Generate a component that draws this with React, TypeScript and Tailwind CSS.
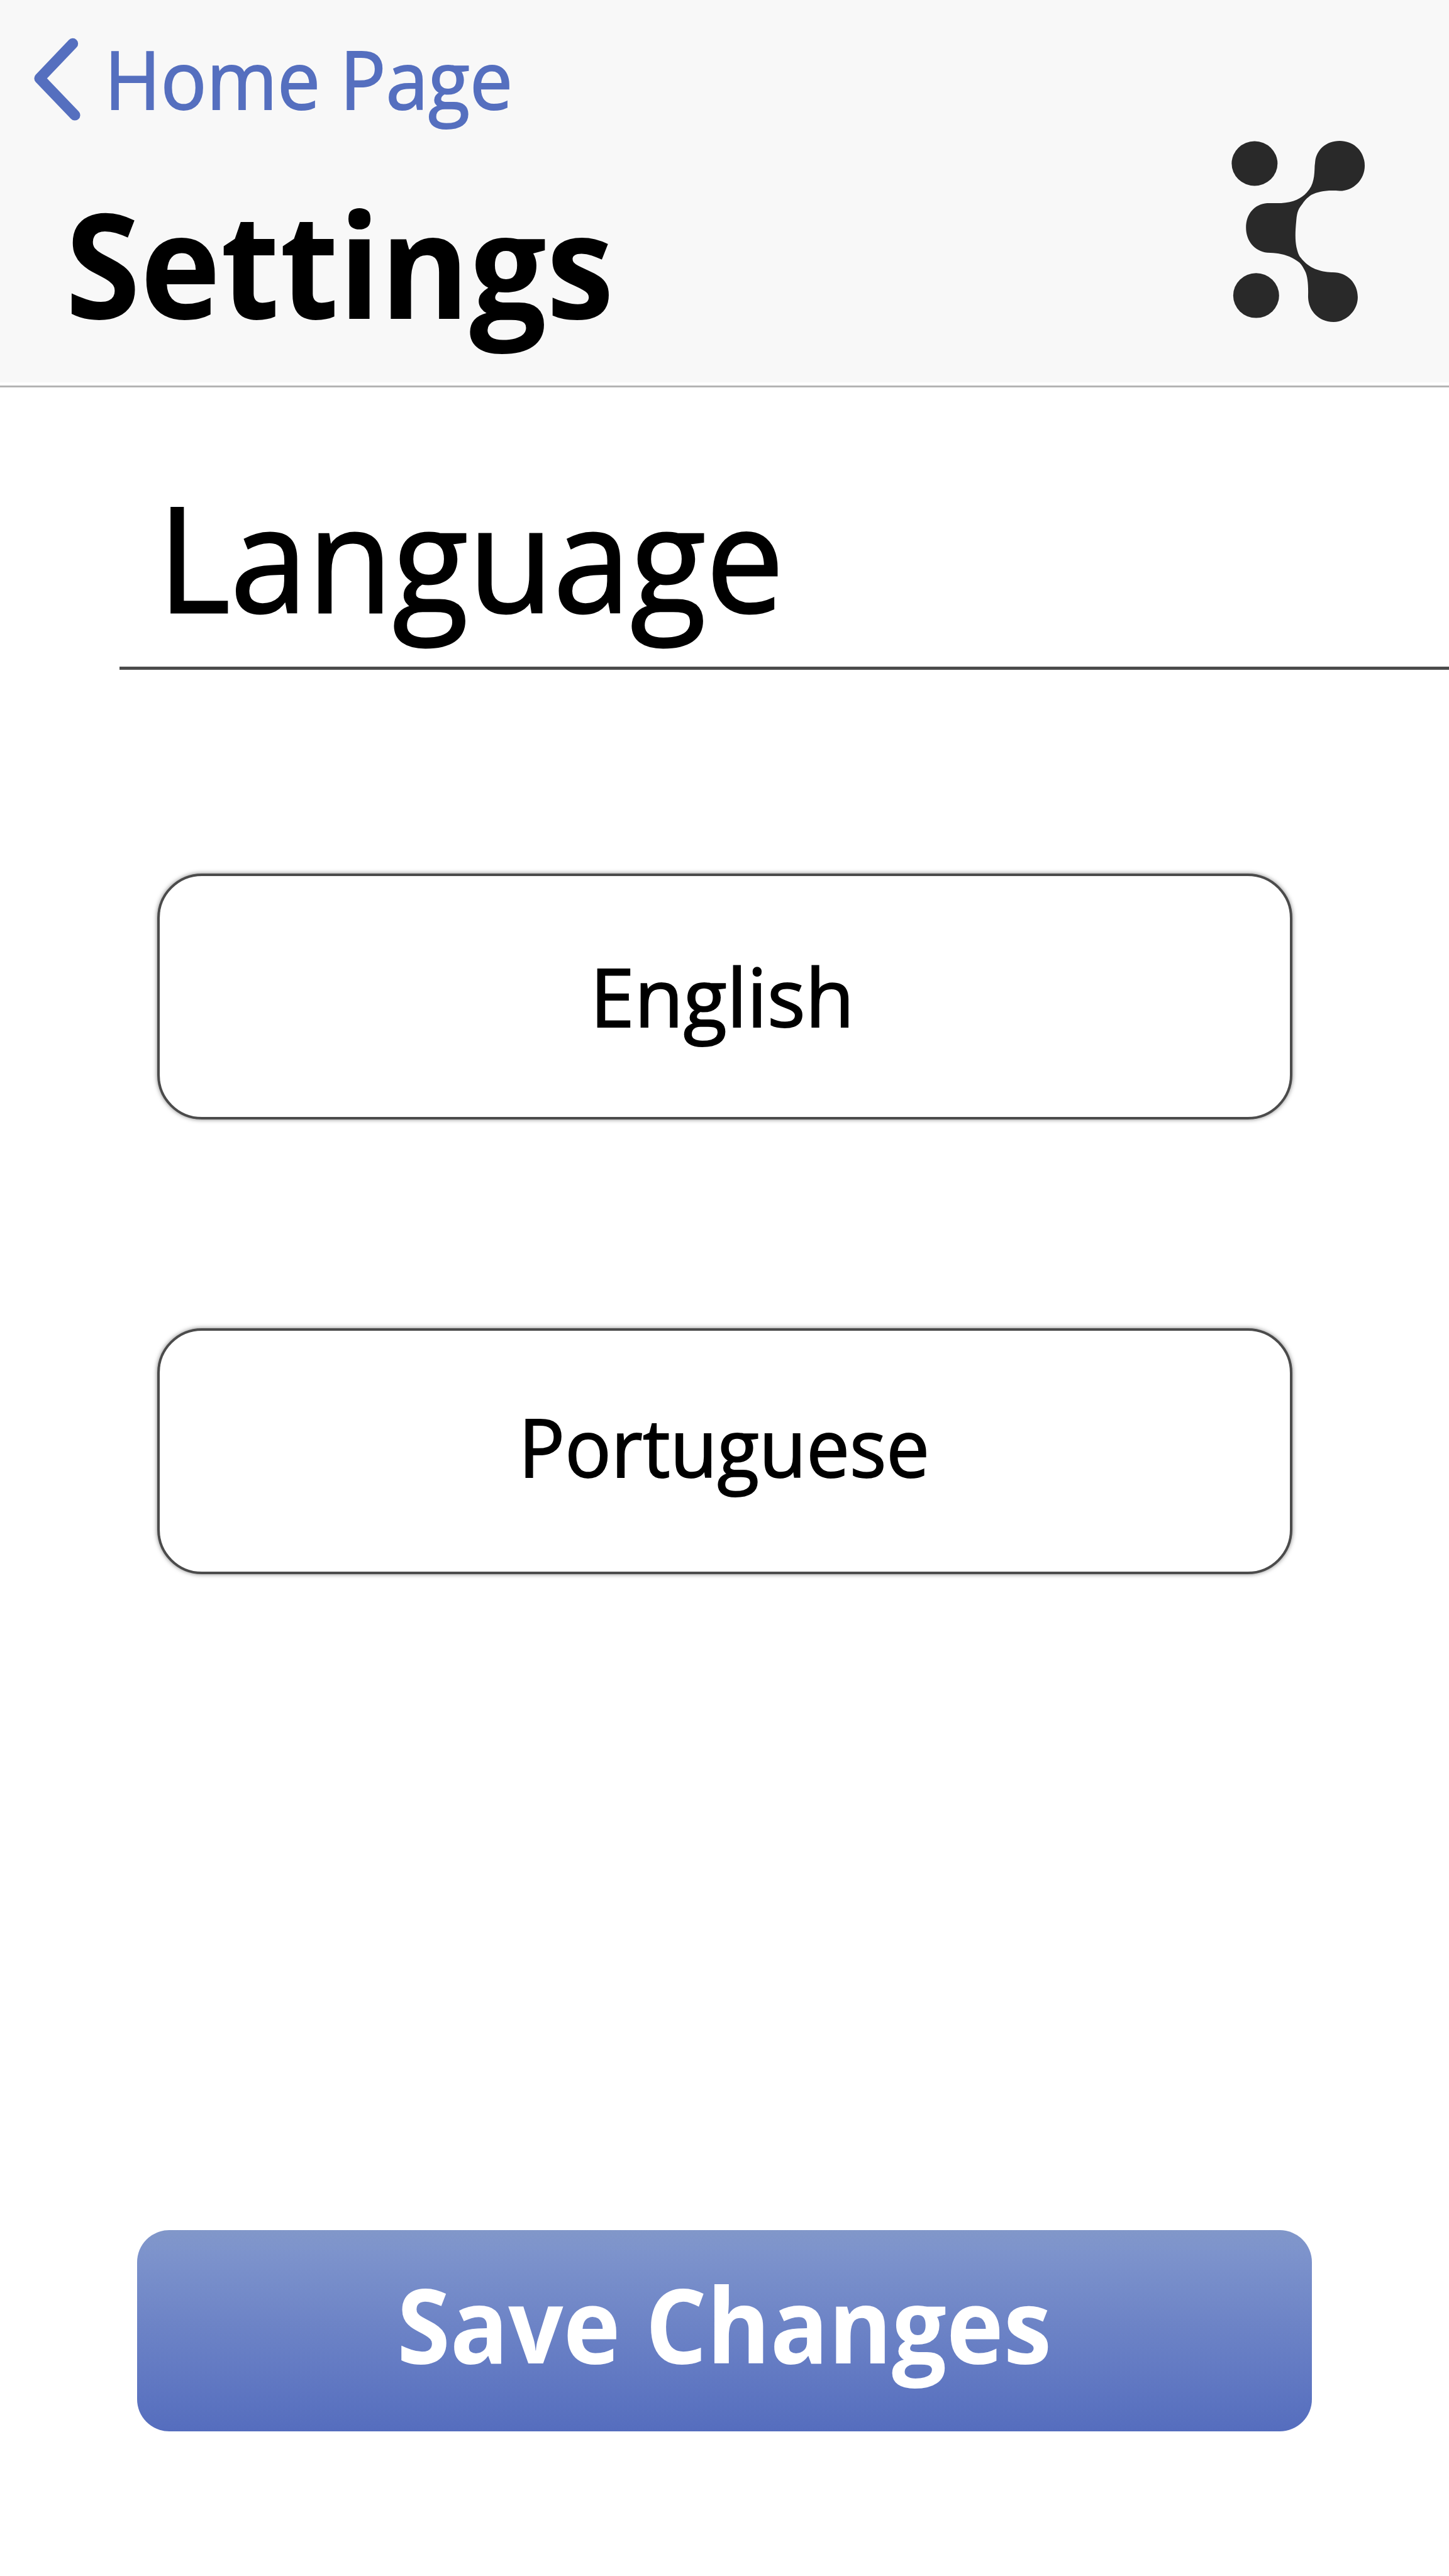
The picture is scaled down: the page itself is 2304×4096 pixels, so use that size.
function ChevronLeft() {
  return (
    <svg className="h-[153.6px] w-[102.4px] shrink-0" viewBox="0 0 480 720" fill="none" aria-hidden="true">
      <path
        d="M364 86 L117 345 L380 619"
        stroke="#556fbf"
        strokeWidth="80"
        strokeLinecap="round"
        strokeLinejoin="round"
      />
    </svg>
  );
}

function Logo() {
  return (
    <svg
      className="h-[352px] w-[288px] shrink-0"
      viewBox="0 0 1350 1568"
      preserveAspectRatio="none"
      fill="#292929"
      aria-hidden="true"
    >
      <ellipse cx="351" cy="303" rx="171" ry="158" />
      <ellipse cx="362.5" cy="1238" rx="171" ry="159" />
      <path
        d="M802 295
           C808 210 880 142 985 142
           C1095 142 1172 220 1172 318
           C1172 415 1090 497 985 497
           C890 490 830 500 775 525
           C740 548 725 564 708 588
           C680 622 668 640 662 705
           C652 800 654 850 663 895
           C672 930 678 950 695 970
           C760 1050 840 1068 925 1074
           C1040 1070 1120 1150 1120 1250
           C1120 1345 1035 1425 940 1425
           C830 1425 746 1345 750 1235
           C752 1170 747 1100 727 1065
           C712 1035 700 1018 685 1004
           C620 955 545 935 445 934
           C350 925 286 850 287 755
           C287 660 350 590 445 583
           L550 583
           C640 580 700 550 740 508
           C795 455 797 385 799 320
           Z"
      />
    </svg>
  );
}

function LanguageOption({ label, className }: { label: string; className: string }) {
  return (
    <button
      type="button"
      className="flex h-[391px] w-[1805px] items-start justify-center rounded-[71px] border-[4px] border-[#4b4b4b] bg-white shadow-[0_0_7px_rgba(0,0,0,0.5)]"
    >
      <span className={className}>{label}</span>
    </button>
  );
}

export default function App() {
  return (
    <div className="flex h-[4096px] w-[2304px] flex-col overflow-hidden bg-white font-['Open_Sans',sans-serif] text-black">
      <header className="flex h-[608px] shrink-0 justify-between bg-[#f8f8f8] pr-24">
        <div className="flex flex-col">
          <a className="flex items-start pl-[38.4px] pt-[51.2px] text-[#556fbf]">
            <ChevronLeft />
            <span className="ml-[25.5px] mt-[8.5px] inline-block origin-left scale-x-[0.941] whitespace-nowrap text-[129px] leading-none [-webkit-text-stroke:2px]">
              Home Page
            </span>
          </a>
          <h1 className="ml-[103.6px] mt-[96px] origin-left scale-x-[0.932] whitespace-nowrap text-[232px] font-bold leading-none">
            Settings
          </h1>
        </div>
        <div className="pt-48">
          <Logo />
        </div>
      </header>
      <div className="mt-[5px] h-[3px] shrink-0 bg-[#b4b4b4]" />

      <main className="flex flex-col">
        <h2 className="ml-[250.5px] mt-[151.5px] origin-left scale-x-[0.952] whitespace-nowrap text-[232px] leading-none [-webkit-text-stroke:3px]">
          Language
        </h2>
        <div className="ml-[190px] mt-[60.5px] h-[5px] bg-[#4b4b4b]" />

        <div className="mt-[323.8px] flex flex-col items-center gap-[332.2px]">
          <LanguageOption
            label="English"
            className="mr-[8px] mt-[126px] inline-block scale-x-[0.985] whitespace-nowrap text-[129px] leading-none [-webkit-text-stroke:2px]"
          />
          <LanguageOption
            label="Portuguese"
            className="mr-[2px] mt-[119.5px] inline-block scale-x-[0.949] whitespace-nowrap text-[129px] leading-none [-webkit-text-stroke:2px]"
          />
        </div>

        <button
          type="button"
          className="mt-[1042.6px] flex h-[320px] w-[1868.8px] items-start justify-center self-center rounded-[51px] bg-[linear-gradient(180deg,#8197c9_0%,#7d93cc_11%,#556dbe_100%)] text-white"
        >
          <span className="mt-[66.5px] inline-block scale-x-[0.93] whitespace-nowrap text-[165px] font-bold leading-none">
            Save Changes
          </span>
        </button>
      </main>
    </div>
  );
}
